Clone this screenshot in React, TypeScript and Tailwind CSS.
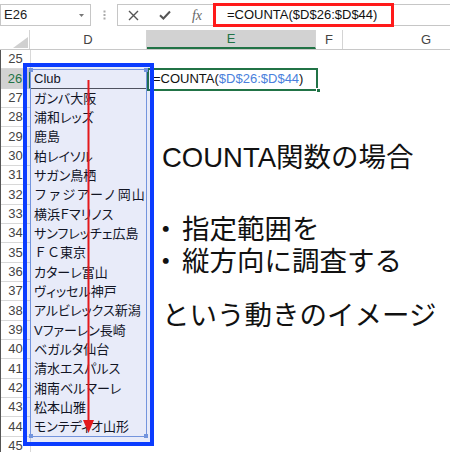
import React from 'react'

const clubs = [
  'Club',
  'ガンバ大阪',
  '浦和レッズ',
  '鹿島',
  '柏レイソル',
  'サガン鳥栖',
  'ファジアーノ岡山',
  '横浜Ｆマリノス',
  'サンフレッチェ広島',
  'ＦＣ東京',
  'カターレ富山',
  'ヴィッセル神戸',
  'アルビレックス新潟',
  'Vファーレン長崎',
  'ベガルタ仙台',
  '清水エスパルス',
  '湘南ベルマーレ',
  '松本山雅',
  'モンテディオ山形',
]

// rows whose text keeps full-width spacing in the reference
const wide: Record<string, string> = {
  'ファジアーノ岡山': 'tracking-[1.2px]',
  'ＦＣ東京': '',
}

const rows = Array.from({ length: 21 }, (_, i) => 25 + i)

function Toolbar() {
  return (
    <div className="flex h-[30px] items-center">
      <div className="flex h-[22px] w-[91px] shrink-0 items-center justify-between border border-[#c6c6c6] pl-[3px] pr-[6px] text-[13px] text-[#222]">
        <span>E26</span>
        <svg width="5" height="3" viewBox="0 0 5 3">
          <path d="M0 0h5L2.5 3z" fill="#777" />
        </svg>
      </div>
      <div className="flex w-[26px] shrink-0 justify-center">
        <svg width="3" height="10" viewBox="0 0 3 10">
          <rect x="0.5" y="0.5" width="2" height="2" fill="#aaa" />
          <rect x="0.5" y="4" width="2" height="2" fill="#aaa" />
          <rect x="0.5" y="7.5" width="2" height="2" fill="#aaa" />
        </svg>
      </div>
      <div className="flex h-[22px] flex-1 items-center border border-r-0 border-[#c6c6c6]">
        <div className="flex w-[31px] shrink-0 justify-center">
          <svg width="11" height="11" viewBox="0 0 11 11">
            <path d="M1 1l9 9M10 1l-9 9" stroke="#555" strokeWidth="1.4" />
          </svg>
        </div>
        <div className="flex w-[32px] shrink-0 justify-center">
          <svg width="12" height="10" viewBox="0 0 12 10">
            <path d="M1 5.2l3.4 3.3L11 1.5" stroke="#555" strokeWidth="2" fill="none" />
          </svg>
        </div>
        <div className="flex w-[32px] shrink-0 justify-center font-['Liberation_Serif',serif] text-[14px] italic text-[#666]">
          fx
        </div>
        <div className="flex h-[24px] w-[181px] shrink-0 items-center border-[3px] border-[#ff1a1a] pl-[11px] text-[13px] text-[#111]">
          =COUNTA($D$26:$D$44)
        </div>
      </div>
    </div>
  )
}

function HeaderRow() {
  return (
    <div className="flex h-[20px] border-b border-[#c8c8c8] text-[13px] text-[#444]">
      <div className="relative w-[30px] shrink-0 border-r border-[#d4d4d4]">
        <svg className="absolute left-0 top-0" width="30" height="20" viewBox="0 0 30 20">
          <path d="M28 7v11H13z" fill="#d0d0d0" />
        </svg>
      </div>
      <div className="flex w-[117px] shrink-0 items-center justify-center border-r border-[#d4d4d4]">D</div>
      <div className="flex w-[169px] shrink-0 items-center justify-center border-b-2 border-r border-[#217346] border-r-[#d4d4d4] bg-[#d2d2d2] text-[#217346]">
        E
      </div>
      <div className="flex w-[27px] shrink-0 items-center justify-center border-r border-[#d4d4d4]">F</div>
      <div className="flex w-[166px] shrink-0 items-center justify-center">G</div>
    </div>
  )
}

function SheetRow({ n }: { n: number }) {
  const label = n >= 26 && n <= 44 ? clubs[n - 26] : ''
  const active = n === 26
  const cellText =
    label in wide
      ? `flex w-[117px] shrink-0 items-center whitespace-nowrap pl-[3px] text-[13px] text-[#111] ${wide[label]}`
      : "flex w-[117px] shrink-0 items-center whitespace-nowrap pl-[3px] text-[13px] text-[#111] [font-feature-settings:'palt']"
  return (
    <div className="flex h-[19.33px]">
      <div
        className={
          active
            ? 'flex w-[30px] shrink-0 items-center justify-center border-b border-r-2 border-b-[#d4d4d4] border-r-[#217346] bg-[#d2d2d2] text-[13px] text-[#217346]'
            : 'flex w-[30px] shrink-0 items-center justify-center border-b border-r border-[#d8d8d8] text-[13px] text-[#444]'
        }
      >
        {n}
      </div>
      <div
        className={
          active
            ? 'flex w-[117px] shrink-0 items-center border-b border-[#555] pl-[3px] text-[13px] text-[#111]'
            : cellText
        }
      >
        {label}
      </div>
      <div className="relative flex w-[169px] shrink-0 items-center pl-[5px] text-[13px] text-[#111]">
        {active && (
          <>
            <span className="whitespace-nowrap">
              =COUNTA(<span className="text-[#4a7fdc]">$D$26:$D$44</span>)
            </span>
            <div className="absolute -bottom-[2px] -left-[1px] -right-[1px] -top-[1px] border-2 border-[#217346]" />
            <div className="absolute -bottom-[4px] -right-[4px] h-[5px] w-[5px] border border-white bg-[#217346]" />
          </>
        )}
      </div>
    </div>
  )
}

function Bullet() {
  return (
    <span className="inline-block w-[20px]">
      <span className="-ml-[10px] inline-block">・</span>
    </span>
  )
}

export default function App() {
  return (
    <div className="relative h-[452px] w-[450px] overflow-hidden bg-white font-['Liberation_Sans','Noto_Sans_CJK_JP',sans-serif]">
      <Toolbar />
      <HeaderRow />
      <div className="border-l border-[#555]">
        {rows.map((n) => (
          <SheetRow key={n} n={n} />
        ))}
      </div>

      {/* referenced range D26:D44 */}
      <div className="pointer-events-none absolute left-[30px] top-[69.33px] h-[367.3px] w-[117px] border border-[#7d9fe0]">
        <div className="absolute -left-[2px] -top-[2px] h-[4px] w-[4px] bg-[#7d9fe0]" />
        <div className="absolute -right-[2px] -top-[2px] h-[4px] w-[4px] bg-[#7d9fe0]" />
        <div className="absolute -bottom-[2px] -left-[2px] h-[4px] w-[4px] bg-[#7d9fe0]" />
        <div className="absolute -bottom-[2px] -right-[2px] h-[4px] w-[4px] bg-[#7d9fe0]" />
      </div>

      {/* blue annotation frame */}
      <div className="pointer-events-none absolute left-[23px] top-[63px] h-[383px] w-[131px] border-4 border-[#0b3cff] bg-[#1e3cc8]/10" />

      {/* red arrow */}
      <svg className="pointer-events-none absolute left-0 top-0" width="450" height="452" viewBox="0 0 450 452">
        <path d="M88.5 80V422" stroke="#e3191c" strokeWidth="2" />
        <path d="M83 420h11l-5.5 13z" fill="#e3191c" />
      </svg>

      {/* text box */}
      <div className="absolute left-[162px] top-[142px] flex flex-col whitespace-nowrap text-[27.5px] leading-[32px] text-[#111]">
        <div>COUNTA関数の場合</div>
        <div className="mt-[40px]">
          <Bullet />
          指定範囲を
        </div>
        <div>
          <Bullet />
          縦方向に調査する
        </div>
        <div className="mt-[22px]">という動きのイメージ</div>
      </div>
    </div>
  )
}
